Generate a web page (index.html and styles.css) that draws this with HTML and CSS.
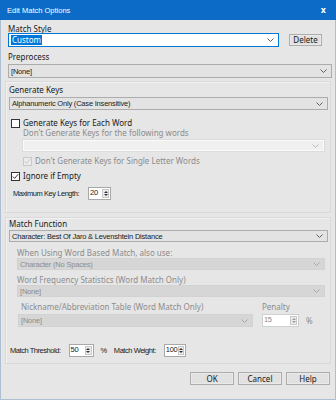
FILE: index.html
```html
<!DOCTYPE html>
<html lang="en">
<head>
    <meta charset="UTF-8">
    <title>Edit Match Options</title>
    <link rel="stylesheet" href="styles.css">
</head>
<body>
    <div class="dialog">
        <div class="titlebar">
            <span class="title">Edit Match Options</span>
            <span class="close">x</span>
        </div>

        <div class="content">
            <div class="label top-label">Match Style</div>
            <div class="row style-row">
                <div class="combo input-combo">
                    <span class="sel-text">Custom</span>
                    <svg class="chev" width="7" height="4" viewBox="0 0 7 4"><polyline points="0.5,0.5 3.5,3.5 6.5,0.5" fill="none" stroke="#606060"/></svg>
                </div>
                <button class="btn delete-btn">Delete</button>
            </div>

            <div class="label pre-label">Preprocess</div>
            <div class="combo plain pre-combo">
                <span>[None]</span>
                <svg class="chev" width="7" height="4" viewBox="0 0 7 4"><polyline points="0.5,0.5 3.5,3.5 6.5,0.5" fill="none" stroke="#606060"/></svg>
            </div>

            <!-- generate keys group -->
            <div class="group keys-group">
                <div class="label">Generate Keys</div>
                <div class="combo plain keys-combo">
                    <span>Alphanumeric Only (Case Insensitive)</span>
                    <svg class="chev" width="7" height="4" viewBox="0 0 7 4"><polyline points="0.5,0.5 3.5,3.5 6.5,0.5" fill="none" stroke="#606060"/></svg>
                </div>

                <div class="check-row each-word">
                    <span class="box"></span>
                    <span class="label">Generate Keys for Each Word</span>
                </div>
                <div class="label dim words-label">Don't Generate Keys for the following words</div>
                <div class="combo empty words-combo">
                    <span></span>
                    <svg class="chev" width="7" height="4" viewBox="0 0 7 4"><polyline points="0.5,0.5 3.5,3.5 6.5,0.5" fill="none" stroke="#b8b8b8"/></svg>
                </div>
                <div class="check-row single-letter">
                    <span class="box disabled"><svg width="7" height="7" viewBox="0 0 7 7"><polyline points="0.8,3.5 2.6,5.4 6.2,1.2" fill="none" stroke="#c4c4c4" stroke-width="1"/></svg></span>
                    <span class="label dim">Don't Generate Keys for Single Letter Words</span>
                </div>

                <div class="check-row ignore-empty">
                    <span class="box"><svg width="7" height="7" viewBox="0 0 7 7"><polyline points="0.8,3.5 2.6,5.4 6.2,1.2" fill="none" stroke="#333" stroke-width="1"/></svg></span>
                    <span class="label">Ignore if Empty</span>
                </div>

                <div class="row key-length">
                    <span class="label small">Maximum Key Length:</span>
                    <div class="spin">
                        <span class="spin-val">20</span>
                        <span class="spin-btns"><i class="up"></i><i class="down"></i></span>
                    </div>
                </div>
            </div>

            <!-- match function group -->
            <div class="group func-group">
                <div class="label">Match Function</div>
                <div class="combo plain func-combo">
                    <span>Character: Best Of Jaro &amp; Levenshtein Distance</span>
                    <svg class="chev" width="7" height="4" viewBox="0 0 7 4"><polyline points="0.5,0.5 3.5,3.5 6.5,0.5" fill="none" stroke="#606060"/></svg>
                </div>

                <div class="sub">
                    <div class="label dim">When Using Word Based Match, also use:</div>
                    <div class="combo disabled-combo">
                        <span>Character (No Spaces)</span>
                        <svg class="chev" width="7" height="4" viewBox="0 0 7 4"><polyline points="0.5,0.5 3.5,3.5 6.5,0.5" fill="none" stroke="#a8a8a8"/></svg>
                    </div>

                    <div class="label dim freq-label">Word Frequency Statistics (Word Match Only)</div>
                    <div class="combo disabled-combo">
                        <span>[None]</span>
                        <svg class="chev" width="7" height="4" viewBox="0 0 7 4"><polyline points="0.5,0.5 3.5,3.5 6.5,0.5" fill="none" stroke="#a8a8a8"/></svg>
                    </div>

                    <div class="nick-row">
                        <div class="nick-col">
                            <div class="label dim nick-label">Nickname/Abbreviation Table (Word Match Only)</div>
                            <div class="combo disabled-combo nick-combo">
                                <span>[None]</span>
                                <svg class="chev" width="7" height="4" viewBox="0 0 7 4"><polyline points="0.5,0.5 3.5,3.5 6.5,0.5" fill="none" stroke="#a8a8a8"/></svg>
                            </div>
                        </div>
                        <div class="penalty-col">
                            <div class="label dim">Penalty</div>
                            <div class="row">
                                <div class="spin spin-dim penalty-spin">
                                    <span class="spin-val">15</span>
                                    <span class="spin-btns"><i class="up"></i><i class="down"></i></span>
                                </div>
                                <span class="label dim pct">%</span>
                            </div>
                        </div>
                    </div>
                </div>

                <div class="row threshold-row">
                    <span class="label small">Match Threshold:</span>
                    <div class="spin">
                        <span class="spin-val">50</span>
                        <span class="spin-btns"><i class="up"></i><i class="down"></i></span>
                    </div>
                    <span class="label small pct">%</span>
                    <span class="label small weight-label">Match Weight:</span>
                    <div class="spin">
                        <span class="spin-val">100</span>
                        <span class="spin-btns"><i class="up"></i><i class="down"></i></span>
                    </div>
                </div>
            </div>

            <div class="buttons">
                <button class="btn">OK</button>
                <button class="btn">Cancel</button>
                <button class="btn">Help</button>
            </div>
        </div>
    </div>
</body>
</html>
```

FILE: styles.css
```css
body {
    margin: 0;
    font-family: "Noto Sans", "Open Sans", sans-serif;
    font-size: 8px;
    color: #1a1a1a;
    background: #e6e6e6;
}
.dialog {
    width: 336px;
    height: 400px;
    box-sizing: border-box;
    background: #e6e6e6;
    border: 1px solid #aebfd3;
    border-top: none;
    display: flex;
    flex-direction: column;
}
.titlebar {
    height: 20px;
    background: #0c6bc7;
    color: #fff;
    display: flex;
    align-items: center;
    justify-content: space-between;
    padding: 0 10px 0 7px;
    margin: 0 -1px;
}
.title {
    font-family: "Liberation Sans", sans-serif;
    font-size: 7.5px;
}
.close {
    font-family: "DejaVu Sans", sans-serif;
    font-weight: bold;
    font-size: 8px;
}
.content {
    padding: 0 4px 0 6px;
    display: flex;
    flex-direction: column;
}
.label {
    line-height: 10px;
    white-space: nowrap;
}
.small {
    font-family: "Liberation Sans", sans-serif;
    font-size: 7.5px;
    letter-spacing: -0.45px;
}
.dim {
    color: #8c8c8c;
}
.row {
    display: flex;
    align-items: center;
}
.top-label {
    margin: 4px 0 0 1px;
}
.style-row {
    margin-top: -1px;
    height: 14px;
}
.combo {
    box-sizing: border-box;
    display: flex;
    align-items: center;
    justify-content: space-between;
    font-family: "Liberation Sans", sans-serif;
    font-size: 7.5px;
    letter-spacing: -0.2px;
    padding: 0 4px 0 2px;
}
.chev {
    flex: none;
}
.input-combo {
    width: 271px;
    height: 14px;
    background: #fff;
    border: 1px solid #0078d7;
    margin-left: 1px;
}
.sel-text {
    background: #0078d7;
    color: #fff;
    padding: 0 1px;
    line-height: 10px;
    font-family: "Noto Sans", sans-serif;
    font-size: 8px;
    letter-spacing: 0;
}
.btn {
    font-family: "Noto Sans", sans-serif;
    font-size: 8px;
    color: #1a1a1a;
    background: #e1e1e1;
    border: 1px solid #adadad;
    box-shadow: inset 0 0 0 1px #e9e9e9;
    padding: 0;
    height: 13px;
    line-height: 10px;
}
.delete-btn {
    width: 33px;
    height: 12px;
    margin-left: 10px;
}
.pre-label {
    margin: 5px 0 0 1px;
}
.plain {
    background: #e3e3e3;
    border: 1px solid #acacac;
}
.pre-combo {
    height: 14px;
    margin: 2px 0 0 1px;
    width: 324px;
}
.group {
    border: 1px solid #d9d9d9;
    box-shadow: 1px 1px 0 #f2f2f2 inset;
    margin-left: -2px;
    margin-right: 0;
    padding: 3px 4px 0 3px;
}
.keys-group {
    margin-top: 3px;
    height: 132px;
    box-sizing: border-box;
}
.keys-combo {
    height: 13px;
    margin-top: 2px;
    width: 319px;
}
.check-row {
    display: flex;
    align-items: center;
    height: 10px;
}
.box {
    box-sizing: border-box;
    width: 9px;
    height: 9px;
    border: 1px solid #333;
    background: #fff;
    display: flex;
    align-items: center;
    justify-content: center;
    margin-right: 3px;
}
.box.disabled {
    border-color: #c8c8c8;
    background: #ececec;
}
.each-word {
    margin: 8px 0 0 2px;
}
.words-label {
    margin-left: 14px;
}
.empty {
    background: #f0f0f0;
    border: 1px solid #fbfbfb;
    outline: 1px solid #dcdcdc;
    height: 11px;
    margin: 2px 0 0 14px;
    width: 301px;
}
.single-letter {
    margin: 5px 0 0 14px;
}
.ignore-empty {
    margin: 5px 0 0 2px;
}
.key-length {
    margin: 6px 0 0 4px;
    height: 13px;
}
.key-length .spin {
    margin-left: 9px;
}
.spin {
    display: flex;
    height: 13px;
    width: 23px;
    border: 1px solid #a8a8a8;
    box-sizing: border-box;
    background: #fff;
    justify-content: space-between;
}
.spin-val {
    font-family: "Liberation Sans", sans-serif;
    font-size: 7.5px;
    letter-spacing: -0.3px;
    line-height: 9px;
    padding: 0 1px;
}
.spin-btns {
    width: 7px;
    margin: 1px 1px 1px 0;
    display: flex;
    flex-direction: column;
    border: 1px solid #c8c8c8;
    box-sizing: border-box;
    background: #ececec;
}
.spin-btns i {
    flex: 1;
    display: flex;
    align-items: center;
    justify-content: center;
}
.spin-btns i::before {
    content: "";
    border-left: 2px solid transparent;
    border-right: 2px solid transparent;
}
.spin-btns .up::before {
    border-bottom: 2px solid #333;
}
.spin-btns .down::before {
    border-top: 2px solid #333;
}
.func-group {
    margin-top: 4px;
    height: 147px;
    box-sizing: border-box;
    padding-top: 1px;
}
.func-combo {
    height: 12px;
    margin-top: 1px;
    width: 319px;
}
.sub {
    margin: 6px 0 0 8px;
}
.disabled-combo {
    background: #d6d6d6;
    border: 1px solid #d2d2d2;
    color: #8c8c8c;
    height: 12px;
    width: 308px;
}
.freq-label {
    margin-top: 5px;
}
.nick-row {
    display: flex;
    margin-top: 5px;
}
.nick-label {
    margin-left: 4px;
}
.nick-combo {
    width: 235px;
    height: 13px;
    margin-top: 2px;
    margin-left: 1px;
}
.penalty-col {
    margin-left: 9px;
}
.penalty-col .row {
    margin-top: 2px;
}
.penalty-spin {
    width: 37px;
    border-color: #cfcfcf;
}
.spin-dim .spin-val {
    color: #8c8c8c;
}
.spin-dim .spin-btns .up::before {
    border-bottom-color: #999;
}
.spin-dim .spin-btns .down::before {
    border-top-color: #999;
}
.pct {
    margin-left: 7px;
}
.threshold-row {
    margin: 17px 0 0 1px;
    height: 13px;
}
.threshold-row .spin {
    margin-left: 8px;
    width: 25px;
}
.weight-label {
    margin-left: 7px;
}
.threshold-row .weight-label + .spin {
    margin-left: 8px;
    width: 22px;
}
.buttons {
    display: flex;
    justify-content: flex-end;
    gap: 4px;
    margin: 8px 1px 0 0;
}
.buttons .btn {
    width: 44px;
    height: 13px;
}
```
